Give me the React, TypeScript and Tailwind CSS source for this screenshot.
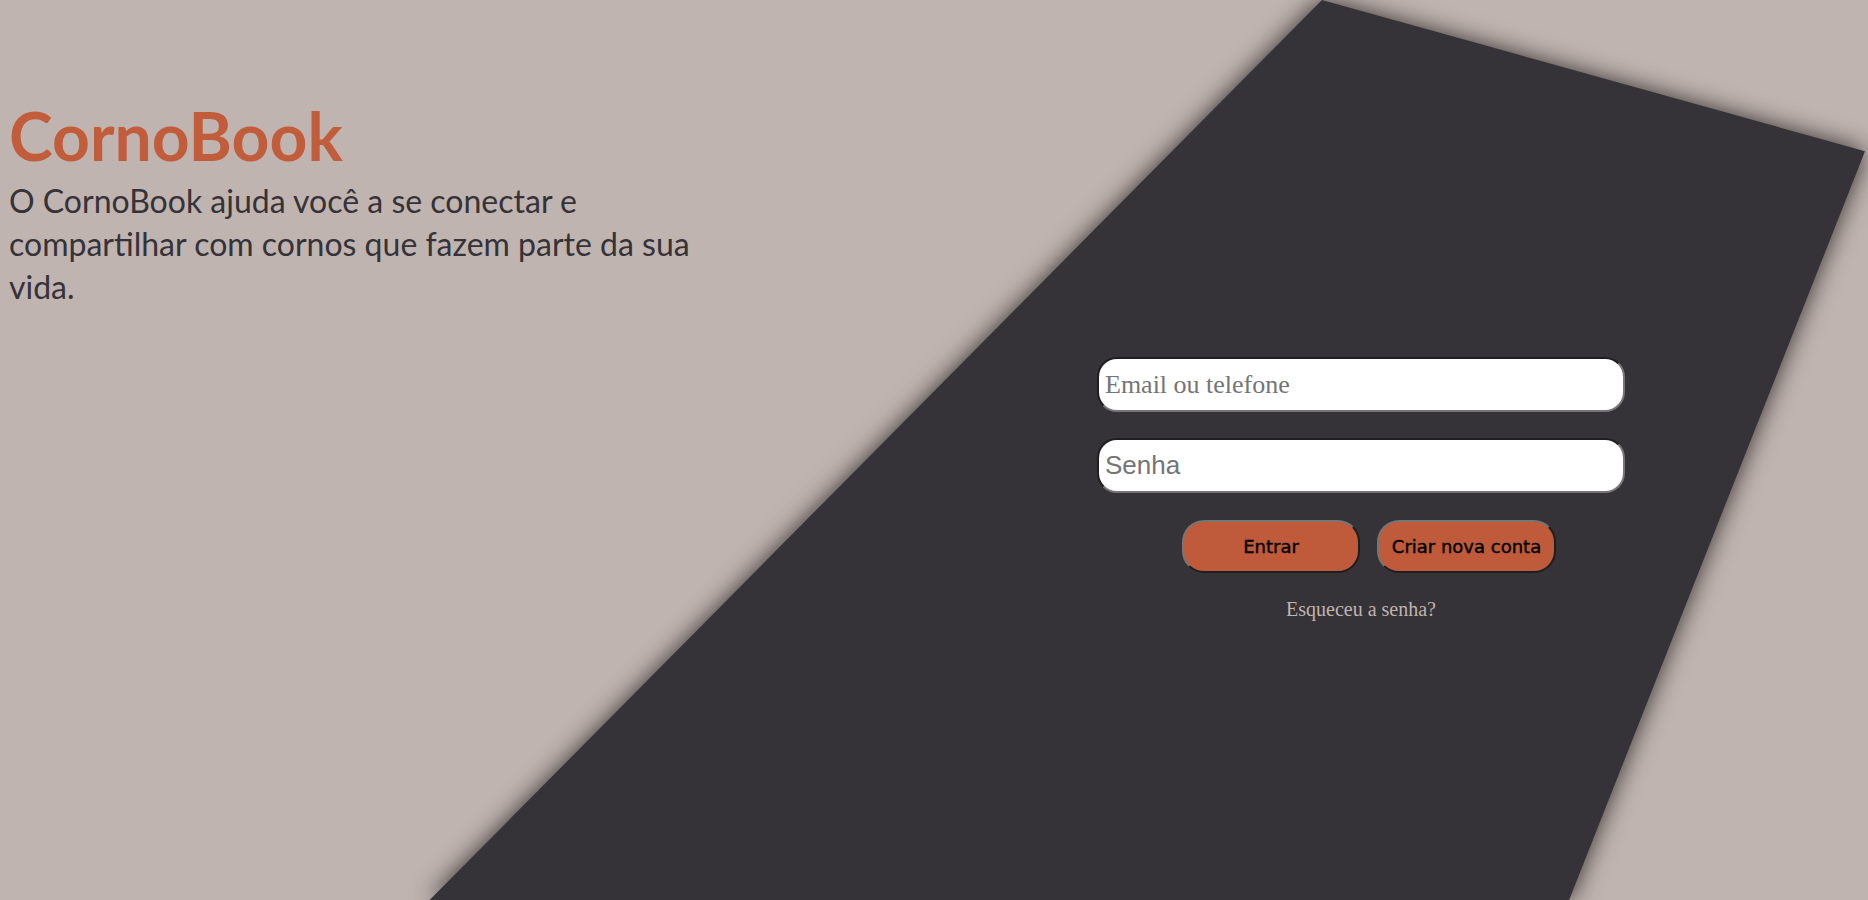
export default function App() {
  return (
    <div className="relative min-h-screen overflow-hidden bg-[#c0b4b0]">
      {/* slanted dark panel behind the login form */}
      <div className="absolute inset-0 [filter:drop-shadow(0_0_12px_rgba(0,0,0,0.75))]">
        <div className="h-full w-full bg-[#353238] [clip-path:polygon(70.77%_0,99.84%_16.8%,84%_100%,23%_100%)]" />
      </div>

      <div className="relative flex">
        <div className="w-[740px] pl-[9px] pt-[103px]">
          <h1 className="text-[66px] font-bold leading-[66px] text-[#c25d3b] [font-family:Lato,sans-serif]">
            CornoBook
          </h1>
          <p className="mt-[10px] w-[716px] text-[32px] leading-[43px] text-[#353238] [font-family:Lato,sans-serif]">
            O CornoBook ajuda você a se conectar e compartilhar com cornos que fazem parte da sua vida.
          </p>
        </div>

        <form
          className="ml-[357px] flex w-[528px] flex-col pt-[357px]"
          onSubmit={(e) => e.preventDefault()}
        >
          <input
            type="text"
            placeholder="Email ou telefone"
            className="h-[55px] w-full rounded-[20px] border-2 border-t-[#1e1e1e] border-l-[#1e1e1e] border-b-[#767676] border-r-[#767676] bg-white px-[6px] text-[26px] text-black outline-none placeholder:text-[#757575] [font-family:'Liberation_Serif',serif]"
          />
          <input
            type="password"
            placeholder="Senha"
            className="mt-[26px] h-[55px] w-full rounded-[20px] border-2 border-t-[#1e1e1e] border-l-[#1e1e1e] border-b-[#767676] border-r-[#767676] bg-white px-[6px] text-[26px] text-black outline-none placeholder:text-[#757575] [font-family:'Liberation_Sans',sans-serif]"
          />
          <div className="mt-[27px] flex gap-[17px] pl-[85px]">
            <button
              type="submit"
              className="h-[53px] w-[178px] rounded-[22px] border-2 border-t-[#767676] border-l-[#767676] border-b-[#1e1e1e] border-r-[#1e1e1e] bg-[#bf5a3a] text-[18px] text-black [-webkit-text-stroke:0.4px_black] [font-family:'DejaVu_Sans',sans-serif]"
            >
              Entrar
            </button>
            <button
              type="button"
              className="h-[53px] w-[179px] rounded-[22px] border-2 border-t-[#767676] border-l-[#767676] border-b-[#1e1e1e] border-r-[#1e1e1e] bg-[#bf5a3a] text-[18px] text-black [-webkit-text-stroke:0.4px_black] [font-family:'DejaVu_Sans',sans-serif]"
            >
              Criar nova conta
            </button>
          </div>
          <a
            href="#"
            className="mt-[21px] self-center text-[20px] text-[#c0b4b0] [font-family:'Liberation_Serif',serif]"
          >
            Esqueceu a senha?
          </a>
        </form>
      </div>
    </div>
  );
}
